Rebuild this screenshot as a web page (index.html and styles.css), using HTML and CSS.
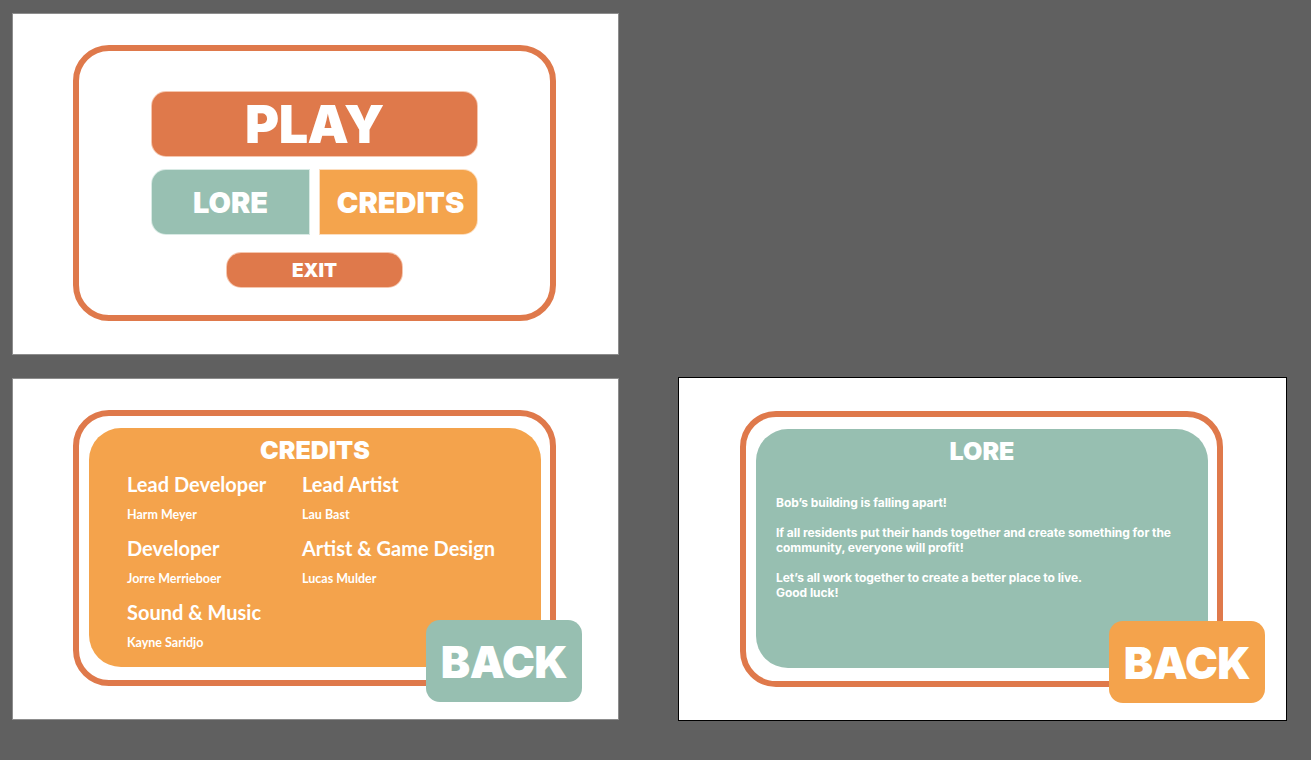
FILE: index.html
```html
<!DOCTYPE html>
<html lang="en">
<head>
<meta charset="utf-8">
<title>Menu screens</title>
<link rel="stylesheet" href="styles.css">
</head>
<body>
<main class="canvas">
  <section class="artboard">
    <div class="frame frame-menu">
      <button class="btn btn-play">PLAY</button>
      <div class="btn-row">
        <button class="btn btn-lore">LORE</button>
        <button class="btn btn-credits">CREDITS</button>
      </div>
      <button class="btn btn-exit">EXIT</button>
    </div>
  </section>

  <div class="empty-cell"></div>

  <section class="artboard">
    <div class="frame frame-panel">
      <div class="panel panel-credits">
        <h2 class="panel-title">CREDITS</h2>
        <div class="credits-grid">
          <div class="credit">
            <h3 class="credit-role">Lead Developer</h3>
            <p class="credit-name">Harm Meyer</p>
          </div>
          <div class="credit">
            <h3 class="credit-role">Lead Artist</h3>
            <p class="credit-name">Lau Bast</p>
          </div>
          <div class="credit">
            <h3 class="credit-role">Developer</h3>
            <p class="credit-name">Jorre Merrieboer</p>
          </div>
          <div class="credit">
            <h3 class="credit-role">Artist &amp; Game Design</h3>
            <p class="credit-name">Lucas Mulder</p>
          </div>
          <div class="credit">
            <h3 class="credit-role">Sound &amp; Music</h3>
            <p class="credit-name">Kayne Saridjo</p>
          </div>
        </div>
      </div>
      <button class="btn btn-back btn-back-teal">BACK</button>
    </div>
  </section>

  <section class="artboard artboard-selected">
    <div class="frame frame-panel">
      <div class="panel panel-lore">
        <h2 class="panel-title">LORE</h2>
        <div class="lore-text">
          <p>Bob’s building is falling apart!</p>
          <p>If all residents put their hands together and create something for the community, everyone will profit!</p>
          <p>Let’s all work together to create a better place to live.<br>Good luck!</p>
        </div>
      </div>
      <button class="btn btn-back btn-back-orange">BACK</button>
    </div>
  </section>
</main>
</body>
</html>
```

FILE: styles.css
```css
* {
  box-sizing: border-box;
}

html, body {
  margin: 0;
  padding: 0;
}

body {
  background: #606060;
  width: 1311px;
  height: 760px;
  overflow: hidden;
  font-family: "Lato", "Liberation Sans", sans-serif;
  color: #ffffff;
}

.canvas {
  display: grid;
  grid-template-columns: 607px 609px;
  grid-template-rows: 342px 342px;
  column-gap: 59px;
  row-gap: 23px;
  padding: 13px 0 0 12px;
}

.artboard {
  background: #ffffff;
  border: 1px solid #8d8d8d;
  display: flex;
  align-items: center;
  justify-content: center;
  padding: 0 2px 2px 0;
}

.artboard-selected {
  border-color: #000000;
  margin-top: -1px;
  height: 344px;
  padding-bottom: 0;
}

.frame {
  position: relative;
  width: 483px;
  height: 276px;
  border: 6px solid #df794b;
  border-radius: 36px;
}

/* ---------- main menu ---------- */
.frame-menu {
  display: flex;
  flex-direction: column;
  align-items: center;
  padding-top: 41px;
}

.btn {
  border: none;
  margin: 0;
  padding: 0;
  color: #ffffff;
  font-family: "Inter", "Lato", "Liberation Sans", sans-serif;
  font-weight: 900;
  display: flex;
  align-items: center;
  justify-content: center;
  line-height: 1;
}

.btn-play {
  width: 325px;
  height: 64px;
  border-radius: 14px;
  background: #df794b;
  font-size: 52px;
  letter-spacing: -0.5px;
  padding-top: 1px;
  box-shadow: 0 0 0 1px rgba(238, 160, 120, 0.6);
}

.btn-row {
  display: flex;
  gap: 11px;
  margin-top: 14px;
}

.btn-lore,
.btn-credits {
  width: 157px;
  height: 64px;
  font-size: 29px;
  padding-top: 1px;
}

.btn-lore {
  background: #98c0b2;
  border-radius: 14px 0 0 14px;
  box-shadow: 0 0 0 1px rgba(190, 220, 210, 0.6);
}

.btn-credits {
  background: #f4a44d;
  border-radius: 0 14px 14px 0;
  padding-left: 4px;
  box-shadow: 0 0 0 1px rgba(250, 200, 150, 0.6);
}

.btn-exit {
  width: 175px;
  height: 34px;
  margin-top: 19px;
  border-radius: 14px;
  background: #df794b;
  font-size: 19px;
  padding-top: 1px;
  box-shadow: 0 0 0 1px rgba(238, 160, 120, 0.6);
}

/* ---------- panels ---------- */
.frame-panel {
  display: flex;
  padding: 12px 9px 13px 10px;
}

.panel {
  flex: 1;
  border-radius: 32px;
  padding-top: 8px;
}

.panel-credits {
  background: #f4a34c;
}

.panel-lore {
  background: #97bfb1;
}

.panel-title {
  margin: 0;
  text-align: center;
  font-family: "Inter", "Lato", sans-serif;
  font-size: 25px;
  line-height: 28px;
  font-weight: 900;
}

.credits-grid {
  display: grid;
  grid-template-columns: 175px auto;
  row-gap: 13px;
  padding-left: 38px;
  margin-top: 8px;
}

.credit-role {
  margin: 0;
  font-size: 20px;
  line-height: 24px;
  font-weight: 700;
  white-space: nowrap;
}

.credit-name {
  margin: 11px 0 0;
  font-size: 12.5px;
  line-height: 16px;
  font-weight: 700;
}

.lore-text {
  margin-top: 30px;
  padding: 0 20px;
  font-family: "Inter", "Lato", sans-serif;
  font-size: 12px;
  line-height: 15px;
  font-weight: 700;
  letter-spacing: -0.05px;
}

.lore-text p {
  margin: 0 0 15px;
}

/* ---------- back buttons ---------- */
.btn-back {
  position: absolute;
  bottom: -22px;
  width: 156px;
  height: 82px;
  border-radius: 14px;
  font-size: 44px;
  letter-spacing: -0.5px;
  padding-top: 2px;
}

.btn-back-teal {
  right: -32px;
  background: #97bfb1;
}

.btn-back-orange {
  right: -48px;
  background: #f4a34c;
}
```
